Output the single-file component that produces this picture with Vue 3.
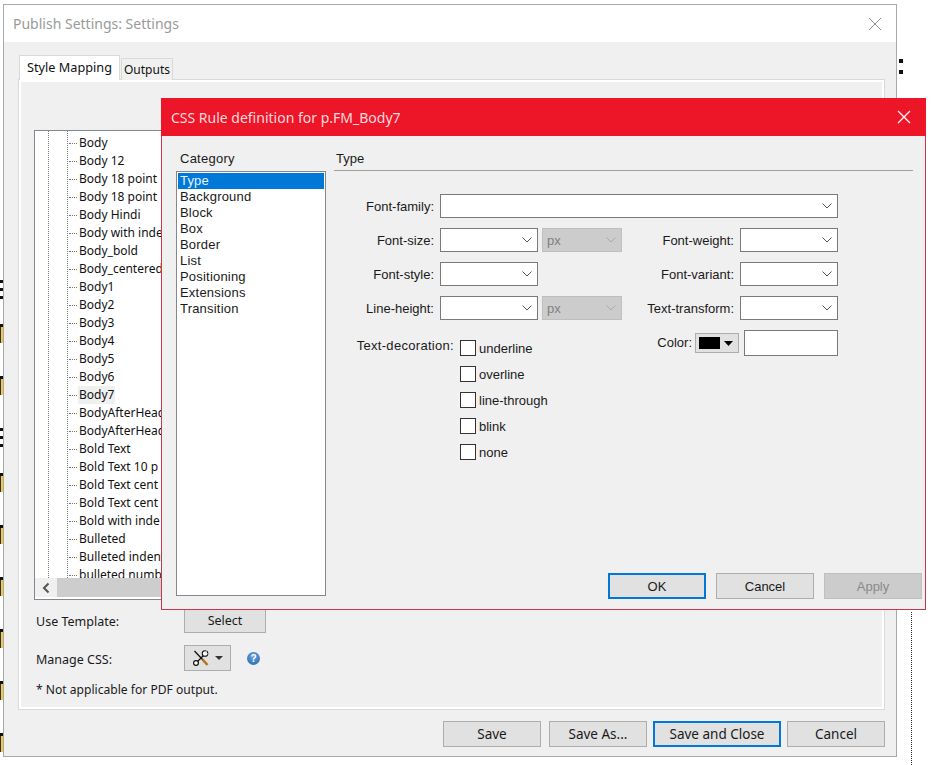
<script setup>
const treeRows = ['Body','Body 12','Body 18 point','Body 18 point','Body Hindi','Body with indent','Body_bold','Body_centered','Body1','Body2','Body3','Body4','Body5','Body6','Body7','BodyAfterHead','BodyAfterHead','Bold Text','Bold Text 10 p','Bold Text cent','Bold Text cent','Bold with inde','Bulleted','Bulleted indent','bulleted numb']
const categories = ['Type','Background','Block','Box','Border','List','Positioning','Extensions','Transition']
const decorations = ['underline','overline','line-through','blink','none']
const edgeMarks = [
  { top: 280, wide: true }, { top: 324 }, { top: 376 }, { top: 428, wide: true }, { top: 473 },
  { top: 525 }, { top: 577 }, { top: 629 }, { top: 681 }, { top: 733 }
]
const midRows = [
  { label: 'Font-size:', unit: true, right: 'Font-weight:' },
  { label: 'Font-style:', unit: false, right: 'Font-variant:' },
  { label: 'Line-height:', unit: true, right: 'Text-transform:' }
]
</script>

<template>
  <div class="desktop">
    <div v-for="m in edgeMarks" :key="m.top" class="edge" :class="{ wide: m.wide }" :style="{ top: m.top + 'px' }"></div>
    <div class="colon c1"></div>
    <div class="colon c2"></div>
    <div class="dots"></div>

    <section class="win outer">
      <header class="outer-title">
        <span>Publish Settings: Settings</span>
        <svg class="x" width="14" height="14" viewBox="0 0 14 14"><path d="M1 1 13 13M13 1 1 13" stroke="#8f8f8f" stroke-width="1" fill="none"/></svg>
      </header>
      <div class="outer-body">
        <div class="tabs">
          <div class="tab active">Style Mapping</div>
          <div class="tab">Outputs</div>
        </div>
        <div class="panel">
          <div class="tree">
            <div class="tree-scroll">
              <div class="tree-lines">
                <div v-for="(r, i) in treeRows" :key="i" class="tree-row">
                  <span class="tree-label" :class="{ selected: r === 'Body7' }">{{ r }}</span>
                </div>
              </div>
            </div>
            <div class="hscroll">
              <div class="hbtn">
                <svg width="10" height="12" viewBox="0 0 10 12"><path d="M7.5 1.5 3 6l4.500 4.500" fill="none" stroke="#555" stroke-width="2"/></svg>
              </div>
              <div class="hthumb"></div>
            </div>
          </div>
          <div class="opt first">
            <span class="opt-label">Use Template:</span>
            <button class="btn select-btn">Select</button>
          </div>
          <div class="opt second">
            <span class="opt-label">Manage CSS:</span>
            <button class="btn tool-btn">
              <svg width="16" height="16" viewBox="0 0 16 16">
                <path d="M1.500 1 10 10" stroke="#111" stroke-width="1.300" fill="none"/>
                <path d="M9.500 9.500 14.500 15" stroke="#b8741a" stroke-width="2.600" fill="none"/>
                <path d="M10.500 5.500 4 12" stroke="#111" stroke-width="1.300" fill="none"/>
                <circle cx="12" cy="3.500" r="2.800" fill="#fff" stroke="#111" stroke-width="1.100"/>
                <path d="M13.500 .5 12.500 3 15 4" fill="none" stroke="#e1e1e1" stroke-width=".8"/>
                <circle cx="3" cy="13" r="2.400" fill="#fff" stroke="#111" stroke-width="1.200"/>
              </svg>
              <svg width="8" height="4" viewBox="0 0 8 4"><path d="M0 0h8L4 4Z" fill="#333"/></svg>
            </button>
            <span class="help">?</span>
          </div>
          <p class="note">* Not applicable for PDF output.</p>
        </div>
        <footer class="outer-foot">
          <button class="btn">Save</button>
          <button class="btn">Save As...</button>
          <button class="btn default wide">Save and Close</button>
          <button class="btn">Cancel</button>
        </footer>
      </div>
    </section>

    <section class="win dialog">
      <header class="dialog-title">
        <span>CSS Rule definition for p.FM_Body7</span>
        <svg width="14" height="14" viewBox="0 0 14 14"><path d="M1 1 13 13M13 1 1 13" stroke="#fff" stroke-width="1.200" fill="none"/></svg>
      </header>
      <div class="dialog-cols">
        <div class="cat-col">
          <div class="cat-head">Category</div>
          <ul class="cat-list">
            <li v-for="(c, i) in categories" :key="c" :class="{ on: i === 0 }">{{ c }}</li>
          </ul>
        </div>
        <div class="main-col">
          <div class="main-head">Type</div>
          <div class="form">
            <div class="row">
              <label class="lab">Font-family:</label>
              <div class="sel full">
                <svg width="10" height="6" viewBox="0 0 10 6"><path d="M.5.500 5 5 9.500.500" fill="none" stroke="#555"/></svg>
              </div>
            </div>
            <div v-for="r in midRows" :key="r.label" class="row">
              <label class="lab">{{ r.label }}</label>
              <div class="sel">
                <svg width="10" height="6" viewBox="0 0 10 6"><path d="M.5.500 5 5 9.500.500" fill="none" stroke="#555"/></svg>
              </div>
              <div class="sel unit" :class="{ ghost: !r.unit }">
                <template v-if="r.unit">
                  <span>px</span>
                  <svg width="10" height="6" viewBox="0 0 10 6"><path d="M.5.500 5 5 9.500.500" fill="none" stroke="#a8a8a8"/></svg>
                </template>
              </div>
              <label class="lab lab-right">{{ r.right }}</label>
              <div class="sel">
                <svg width="10" height="6" viewBox="0 0 10 6"><path d="M.5.500 5 5 9.500.500" fill="none" stroke="#555"/></svg>
              </div>
            </div>
            <div class="lower">
              <div class="deco">
                <label class="lab deco-lab">Text-decoration:</label>
                <div class="checks">
                  <div v-for="d in decorations" :key="d" class="check">
                    <span class="box"></span><span class="check-text">{{ d }}</span>
                  </div>
                </div>
              </div>
              <div class="color">
                <label class="color-lab">Color:</label>
                <button class="swatch-btn">
                  <span class="swatch"></span>
                  <svg width="9" height="5" viewBox="0 0 9 5"><path d="M0 0h9L4.500 5Z" fill="#000"/></svg>
                </button>
                <div class="color-input"></div>
              </div>
            </div>
          </div>
          <footer class="dialog-foot">
            <button class="btn default">OK</button>
            <button class="btn">Cancel</button>
            <button class="btn disabled">Apply</button>
          </footer>
        </div>
      </div>
    </section>
  </div>
</template>

<style>
html, body { margin: 0; background: #fff; }
</style>

<style scoped>
.desktop {
  position: relative;
  width: 936px;
  height: 765px;
  overflow: hidden;
  background: #fff;
  font-family: "Liberation Sans", Arial, sans-serif;
  font-size: 13px;
  color: #1a1a1a;
}
.edge {
  position: absolute;
  left: 0;
  width: 3px;
  height: 19px;
  border-top: 3px solid #111;
  box-sizing: border-box;
  background: linear-gradient(90deg, #333 0 1px, #f2c84b 1px);
}
.edge.wide {
  border-top: none;
  background: repeating-linear-gradient(180deg, #111 0 3px, #fff 3px 8px);
}
.colon { position: absolute; left: 899px; width: 4px; height: 4px; background: #111; }
.c1 { top: 59px; }
.c2 { top: 70px; }
.dots {
  position: absolute;
  left: 911px;
  top: 612px;
  height: 153px;
  border-left: 1px dotted #222;
}
.win { position: absolute; box-sizing: border-box; }
.outer {
  left: 3px;
  top: 4px;
  width: 894px;
  height: 753px;
  border: 1px solid #a9a9a9;
  display: flex;
  flex-direction: column;
  background: #f0f0f0;
}
.outer-title {
  height: 37px;
  flex: none;
  background: #fff;
  display: flex;
  align-items: center;
  justify-content: space-between;
  padding: 0 14px 0 9px;
  font-family: "Noto Sans", sans-serif;
  font-size: 14px;
  color: #9a9a9a;
}
.outer-body {
  flex: 1;
  display: flex;
  flex-direction: column;
  padding: 14px 11px 9px 14px;
  min-height: 0;
}
.tabs { display: flex; align-items: flex-end; height: 24px; flex: none; padding-left: 1px; position: relative; z-index: 1; margin-bottom: -1px; }
.tab {
  box-sizing: border-box;
  height: 22px;
  width: 52px;
  margin-left: 1px;
  display: flex;
  align-items: center;
  justify-content: center;
  border: 1px solid #d9d9d9;
  border-bottom: none;
  background: #f0f0f0;
  font-family: "Noto Sans", sans-serif;
  font-size: 12px;
  color: #111;
}
.tab.active { height: 25px; width: 101px; margin-left: 0; padding-bottom: 2px; background: #fff; font-size: 12.7px; }
.panel {
  flex: 1;
  box-sizing: border-box;
  border: 1px solid #d9d9d9;
  box-shadow: inset 0 0 0 2px #fff;
  padding: 50px 15px 0 15px;
  display: flex;
  flex-direction: column;
  font-family: "Noto Sans", sans-serif;
  font-size: 12.5px;
  min-height: 0;
}
.tree {
  box-sizing: border-box;
  height: 470px;
  width: 400px;
  flex: none;
  border: 1px solid #828790;
  background: #fff;
  display: flex;
  flex-direction: column;
  font-size: 12px;
}
.tree-scroll { flex: 1; overflow: hidden; min-height: 0; padding-left: 13px; position: relative; }
.tree-scroll::before {
  content: "";
  position: absolute;
  left: 13px;
  top: 0;
  bottom: 0;
  border-left: 1px dotted #777;
}
.tree-lines { margin-left: 19px; border-left: 1px dotted #777; padding-top: 3px; }
.tree-row {
  height: 18px;
  display: flex;
  align-items: center;
  padding-left: 1px;
  color: #111;
  white-space: nowrap;
}
.tree-row::before {
  content: "";
  width: 8px;
  border-top: 1px dotted #777;
  margin-right: 1px;
  flex: none;
}
.tree-label { padding: 0 1px; line-height: 18px; }
.tree-label.selected { background: #f0f0f0; }
.hscroll { height: 19px; flex: none; background: #f0f0f0; display: flex; margin-bottom: 2px; }
.hbtn { width: 22px; display: flex; align-items: center; justify-content: center; }
.hthumb { flex: 1; background: #cdcdcd; }
.opt { display: flex; align-items: center; flex: none; }
.opt-label { width: 150px; flex: none; padding: 2px 0 0 2px; box-sizing: border-box; }
.first { margin-top: 8px; height: 25px; }
.second { margin-top: 12px; height: 26px; }
.btn {
  box-sizing: border-box;
  width: 98px;
  height: 26px;
  flex: none;
  padding: 0;
  border: 1px solid #adadad;
  background: #e1e1e1;
  font-family: "Liberation Sans", Arial, sans-serif;
  font-size: 13px;
  color: #1a1a1a;
  display: flex;
  align-items: center;
  justify-content: center;
}
.select-btn { width: 82px; height: 25px; font-family: "Noto Sans", sans-serif; font-size: 12.500px; }
.tool-btn { width: 47px; gap: 6px; }
.help {
  margin-left: 16px;
  width: 13px;
  height: 13px;
  border-radius: 50%;
  background: radial-gradient(circle at 50% 35%, #6ea6e0, #1f62ad);
  color: #fff;
  font-family: "Liberation Sans", sans-serif;
  font-weight: 700;
  font-size: 10px;
  line-height: 13px;
  text-align: center;
}
.note { margin: 10px 0 0; padding-left: 2px; line-height: 18px; font-size: 12.100px; }
.outer-foot {
  flex: none;
  margin-top: 11px;
  display: flex;
  justify-content: flex-end;
  gap: 8px;
}
.outer-foot .btn { font-family: "Noto Sans", sans-serif; font-size: 13.500px; }
.outer-foot .default { margin-left: -2px; margin-right: -2px; }
.btn.wide { width: 128px; }
.btn.default { border: 2px solid #0078d7; }
.btn.disabled { background: #ccc; color: #8a8a8a; border-color: #bfbfbf; }

.dialog {
  left: 161px;
  top: 98px;
  width: 765px;
  height: 512px;
  border: 1px solid #c8384c;
  border-top: none;
  display: flex;
  flex-direction: column;
  background: #f0f0f0;
}
.dialog-title {
  height: 38px;
  flex: none;
  margin: 0 -1px;
  background: #ed1528;
  color: #ffd9dc;
  display: flex;
  align-items: center;
  justify-content: space-between;
  padding: 0 15px 0 10px;
  font-family: "Noto Sans", sans-serif;
  font-size: 14px;
}
.dialog-cols { flex: 1; display: flex; min-height: 0; padding: 15px 12px 13px 14px; }
.cat-col { width: 158px; flex: none; display: flex; flex-direction: column; }
.cat-head { height: 20px; flex: none; padding-left: 4px; line-height: 16px; letter-spacing: .25px; }
.cat-list {
  box-sizing: border-box;
  list-style: none;
  margin: 0;
  padding: 1px;
  width: 150px;
  height: 425px;
  flex: none;
  border: 1px solid #828790;
  background: #fff;
  letter-spacing: .2px;
}
.cat-list li { height: 16px; line-height: 16px; padding-left: 2px; }
.cat-list li.on { background: #0078d7; color: #e8f2fb; }
.main-col { flex: 1; min-width: 0; display: flex; flex-direction: column; }
.main-head {
  height: 20px;
  flex: none;
  box-sizing: border-box;
  padding-left: 2px;
  line-height: 16px;
  border-bottom: 1px solid #a0a0a0;
}
.form { width: 504px; padding-top: 23px; display: flex; flex-direction: column; gap: 10px; }
.row { display: flex; align-items: center; height: 24px; }
.lab { width: 100px; flex: none; text-align: right; margin-right: 6px; white-space: nowrap; }
.lab-right { width: 112px; }
.sel {
  box-sizing: border-box;
  width: 98px;
  height: 24px;
  flex: none;
  border: 1px solid #7a7a7a;
  background: #fff;
  display: flex;
  align-items: center;
  justify-content: flex-end;
  padding-right: 5px;
}
.sel.full { width: 398px; }
.sel.unit {
  width: 80px;
  margin-left: 4px;
  background: #ccc;
  border-color: #bfbfbf;
  justify-content: space-between;
  padding-left: 4px;
  color: #808080;
}
.sel.ghost { visibility: hidden; }
.lower { display: flex; justify-content: space-between; align-items: flex-start; }
.deco { display: flex; padding-top: 8px; }
.deco-lab { width: 120px; line-height: 16px; letter-spacing: .3px; }
.checks { display: flex; flex-direction: column; gap: 10px; padding-top: 2px; }
.check { display: flex; align-items: center; height: 16px; }
.box { box-sizing: border-box; width: 16px; height: 16px; border: 1px solid #333; background: #fff; margin-right: 3px; }
.color { display: flex; align-items: center; height: 26px; }
.color-lab { margin-right: 3px; padding-bottom: 2px; }
.swatch-btn {
  box-sizing: border-box;
  width: 44px;
  height: 20px;
  padding: 0 5px 0 3px;
  border: 1px solid #adadad;
  background: #e1e1e1;
  display: flex;
  align-items: center;
  justify-content: space-between;
}
.swatch { width: 21px; height: 12px; background: #000; }
.color-input {
  box-sizing: border-box;
  width: 94px;
  height: 26px;
  margin-left: 5px;
  border: 1px solid #7a7a7a;
  background: #fff;
}
.dialog-foot { flex: none; display: flex; justify-content: flex-end; gap: 10px; margin: auto -9px -3px 0; }
</style>
